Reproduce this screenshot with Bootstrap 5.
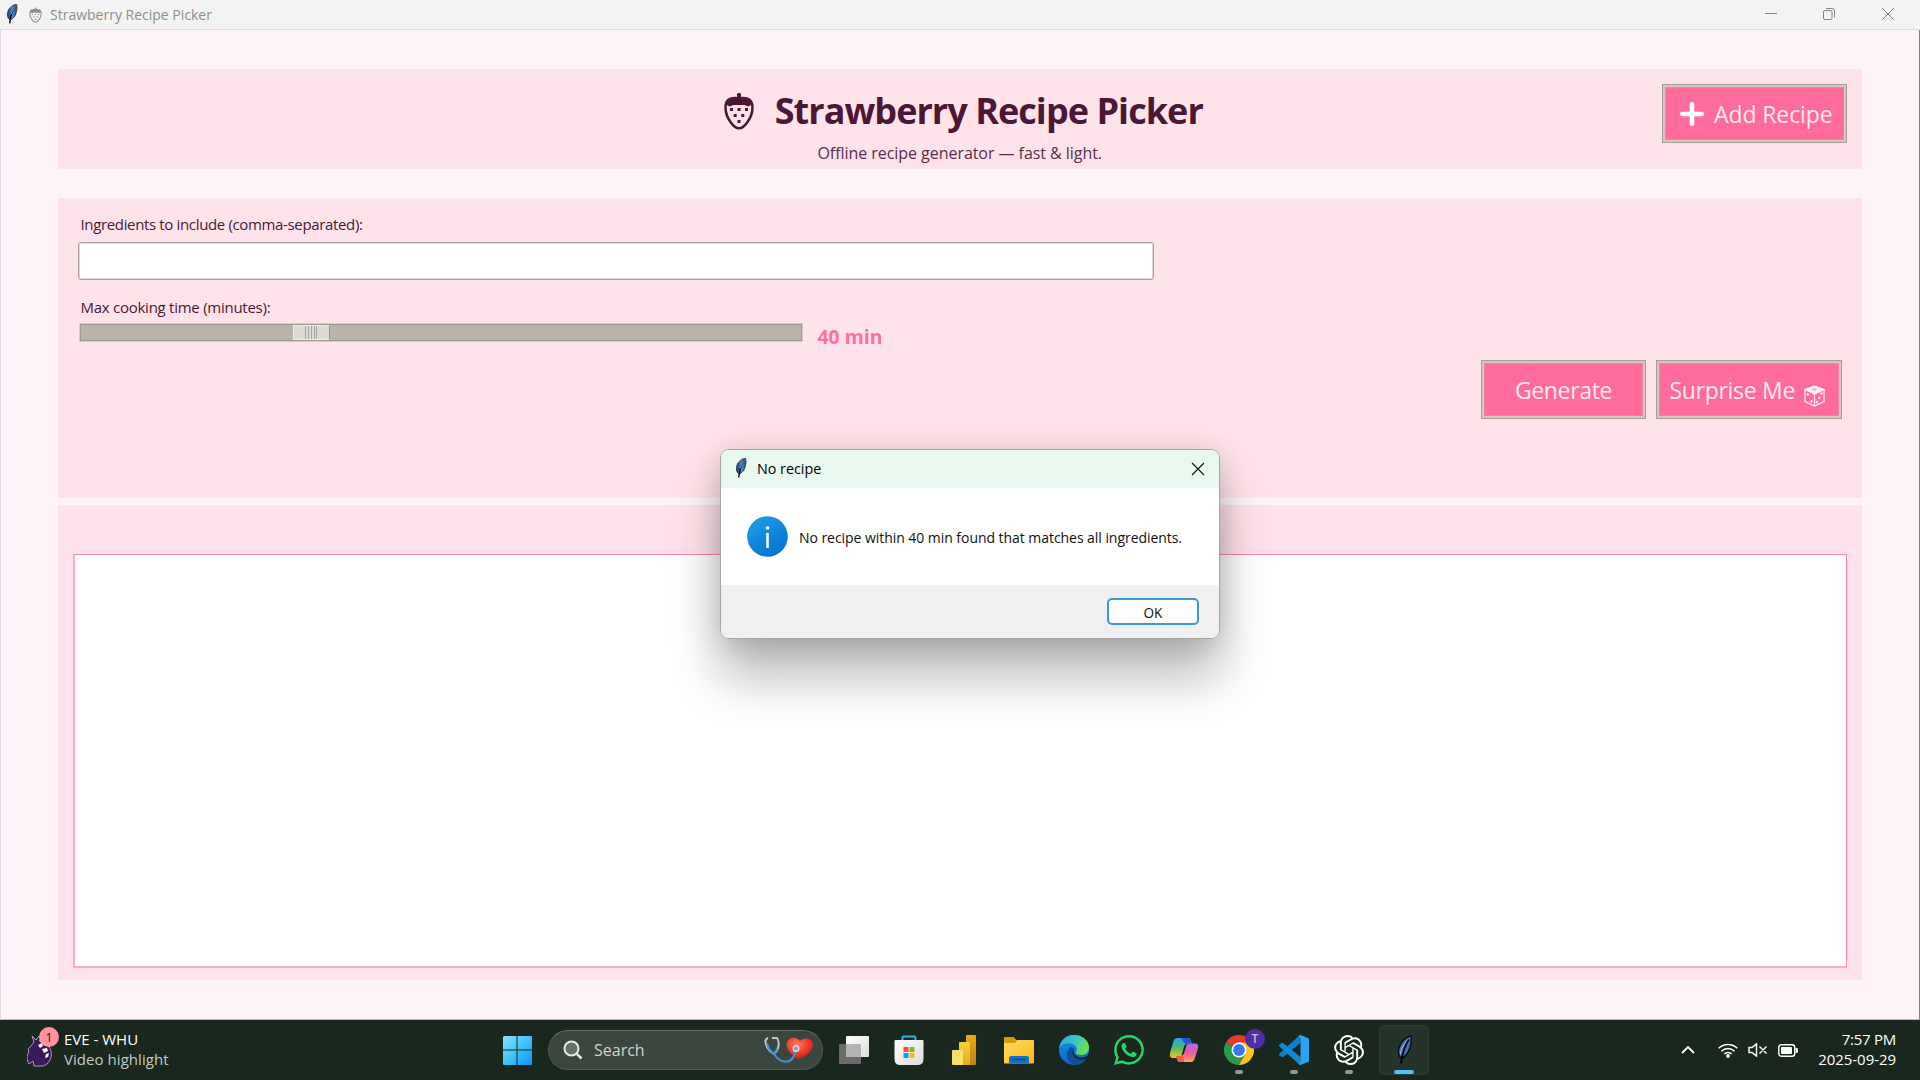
<!DOCTYPE html>
<html lang="en">
<head>
<meta charset="utf-8">
<meta name="viewport" content="width=device-width, initial-scale=1">
<title>Strawberry Recipe Picker</title>
<link rel="stylesheet" href="https://cdn.jsdelivr.net/npm/bootstrap@5.3.0/dist/css/bootstrap.min.css">
<style>
body{font-family:"Open Sans","Noto Sans",sans-serif;width:1920px;height:1080px;overflow:hidden;background:#fff4f7;color:#4b1735;line-height:20px;white-space:nowrap}
svg{display:block;flex:none}
.win-title{height:30px;background:#f3f3f3;border-bottom:1px solid #dedbdc;color:#8f8f8f;font-size:14px}
.win-title .caption{line-height:29px;margin-left:8px}
.win-body{height:990px;padding:39px 57px 0 56.5px;border-left:1px solid #e2d9dc;border-right:1px solid #857f81;border-bottom:1px solid #bdb8ba}
.pane{background:#ffe3ea}
.pane-head{height:100px;padding:15px 15px 0}
.pane-form{height:300px;margin-top:28.5px;padding:15px 20px 0}
.pane-out{height:475px;margin-top:7.5px;padding:48.5px 15px 12px}
.app-name{font-size:36px;font-weight:700;letter-spacing:-.95px;line-height:50px;margin:0}
.tagline{font-size:16px;letter-spacing:-.05px;line-height:22px;color:#5d2c49;margin-top:6px}
.head-side{width:185px}
.pink-btn{height:59px;border-radius:0;border:1px solid #a39f95;background:#ff6b9b;color:#ffe8ef;font-size:23px;letter-spacing:-.35px;line-height:30px;padding:1px 0 0;box-shadow:inset 0 0 0 2px #d9c3c3,inset 0 0 0 3px #ed86a5}
.pink-btn:hover{background:#ff6b9b;color:#ffe8ef}
.field-label{font-size:15px;letter-spacing:-.35px;line-height:22px;padding-left:3px}
.ingredients{width:1076px;height:38px;border:1.500px solid #a7a197;border-radius:3px;margin-top:7px;background:#fff;box-shadow:inset 0 0 0 1px #dcd8d3;padding:0}
.slider{width:724px;height:19px;background:#b9b3a8;border:1px solid #9c978d;outline:1px solid #d6cbc8;outline-offset:-1px;box-shadow:inset 0 0 0 1px #9f998f}
.thumb{width:37px;height:15px;margin:1px 0 0 213px;background:#dddad5;border:1px solid #efede9;border-right-color:#96918a}
.minutes{font-size:19.4px;font-weight:700;color:#ff6f9e;line-height:28px}
.output{height:414px;background:#fff;border:2px solid #ffabc5;border-top:1px solid #ff86ab;border-right:1px solid #ff86ab}
.dialog-win{position:absolute;left:720px;top:449px;width:500px;height:190px;border-radius:9px;border:1px solid #a8a3a4;background:#fff;overflow:hidden;color:#000}
.dialog-shade{position:absolute;left:720px;top:449px;width:500px;height:190px;border-radius:9px;box-shadow:0 38px 52px rgba(0,0,0,.28),0 3px 28px rgba(0,0,0,.16)}
.dialog-bar{height:38px;background:#e8f8ee;padding:0 14px 0 14px}
.dialog-bar .caption{font-size:14.3px;margin-left:10px}
.dialog-msg{height:97px;padding:0 0 0 26px}
.dialog-msg .words{font-size:14px;letter-spacing:-.05px;margin:2px 0 0 11px;color:#111}
.dialog-foot{height:53px;background:#f0f0f0;padding-right:20px}
.ok-btn{width:92px;height:27px;border:2px solid #4196d8;border-radius:5px;background:#fdfdfd;font-size:13.6px;line-height:21px;padding:1px 0 0;color:#111}
.taskbar-strip{height:60px;background:#1a271f;color:#fff;font-size:15px;position:relative}
.widget{padding-left:27px;width:502px}
.news-dot{position:absolute;left:39px;top:7px;width:20px;height:20px;border-radius:50%;background:#ff949f;color:#2d1c1e;font-size:13px;line-height:20px;text-align:center}
.search-pill{width:275px;height:40px;border-radius:20px;background:#3a463e;border:1px solid #4e5952;border-top-color:#636c66;margin:0 15px 0 16px;padding:0 8px 0 14px;color:#cfd3d0;font-size:16px}
.app-slot{width:50px;height:50px;margin-right:5px;padding-top:10px;position:relative;display:flex;justify-content:center;border-radius:5px}
.app-slot.active-app{background:#26332b;border:1px solid #303c35;padding-top:9px}
.run-mark{position:absolute;left:21px;bottom:1px;width:8px;height:4px;border-radius:2px;background:#949b97}
.active-app .run-mark{left:14px;bottom:0;width:20px;background:#4cc2ff}
.user-dot{position:absolute;left:31px;top:4px;width:20px;height:20px;border-radius:50%;background:#512da8;color:#c9b8ea;font-size:12px;font-weight:600;line-height:20px;text-align:center}
</style>
</head>
<body class="d-flex flex-column">
<svg width="0" height="0" class="position-absolute">
  <defs>
    <linearGradient id="fg" x1="0" y1="0" x2="1" y2="0"><stop offset="0" stop-color="#123a78"/><stop offset=".55" stop-color="#4f8fdc"/><stop offset="1" stop-color="#23456f"/></linearGradient>
    <symbol id="feather" viewBox="0 0 12 20">
      <path d="M10.6.5C11.6 4 10.4 11.6 7 14.2 5.6 15.4 4.6 15.8 3.9 15.6 1.3 14.4.8 10.5 2 7.2 3.300 3.700 6.500.6 10.600.500z" fill="url(#fg)" stroke="#3c4044" stroke-width="1"/>
      <path d="M9.200 2.500C6.400 6 4.600 10.200 3.700 19.500" fill="none" stroke="#0b0d12" stroke-width="1.400"/>
      <path d="M9.400 2.600C7.400 4.800 6 7.500 5.300 9.800" fill="none" stroke="#b9d8ff" stroke-width=".8"/>
    </symbol>
    <symbol id="quill" viewBox="0 0 15 29">
      <path d="M14 1C14.500 7 13 15 9.500 19.500 7.500 22 5.500 23 4 23 1.500 21 1 17 2 13 4 7 8.500 2 14 1z" fill="#3f74b4" stroke="#07090c" stroke-width="1.300"/>
      <path d="M12.500 3.500C8 7 4.500 12 3.200 19" fill="none" stroke="#a9bdd4" stroke-width="1"/>
      <path d="M12 4.500C8.500 9 6 14 4 28.500" fill="none" stroke="#050608" stroke-width="1.800"/>
    </symbol>
    <symbol id="berry" viewBox="0 0 30 38">
      <path d="M13 5V1.600Q15 .2 17 1.600V5C24 4.200 29 7 29.300 13H.7C1 7 6 4.200 13 5z" fill="currentColor"/>
      <path d="M1.900 12C.7 19 2.500 24.500 6.500 30 9.500 34.400 12 36.300 15 36.300S20.500 34.400 23.500 30C27.500 24.500 29.300 19 28.100 12" fill="none" stroke="currentColor" stroke-width="2.500"/>
      <path d="M1.500 12l4 2.500 4-1.500 5.500-.5 5.500.5 4 1.500 4-2.500z" fill="currentColor"/>
      <g fill="currentColor"><path d="M6 16h3v3H6zM13.500 16h3v3h-3zM21 16h3v3h-3zM9.700 22h3v3h-3zM17.300 22h3v3h-3zM13.500 28h3v3h-3z"/></g>
    </symbol>
  </defs>
</svg>

<header class="win-title d-flex align-items-center">
  <svg width="12" height="20" style="margin-left:6px;margin-top:-2px"><use href="#feather"/></svg>
  <svg width="13" height="16" style="margin-left:11px"><use href="#berry"/></svg>
  <span class="caption me-auto">Strawberry Recipe Picker</span>
  <svg width="140" height="14" viewBox="0 0 140 14" style="margin:-2px 25px 0 0" fill="none" stroke="#858585">
    <path d="M10 6.500h12"/><rect x="68.500" y="3.500" width="8.500" height="9" rx="1.500"/><path d="M71 1.500h6q2.500 0 2.500 2.500v6.500"/><path d="M127 1l12 12M139 1l-12 12"/>
  </svg>
</header>

<main class="win-body">
  <section class="pane pane-head d-flex justify-content-between">
    <div class="head-side"></div>
    <div class="d-flex flex-column align-items-center pt-1">
      <div class="d-flex align-items-center" style="margin-top:-2px">
        <svg width="30" height="38" style="margin:0 21px 0 7px"><use href="#berry"/></svg>
        <h1 class="app-name">Strawberry Recipe Picker</h1>
      </div>
      <div class="tagline">Offline recipe generator — fast &amp; light.</div>
    </div>
    <button class="btn pink-btn head-side d-flex align-items-center" type="button">
      <svg width="24" height="24" viewBox="0 0 24 24" style="margin:0 10px 0 17px"><path d="M12 2.300v19.400M2.300 12h19.400" stroke="#fff" stroke-width="4.600" stroke-linecap="round"/></svg>
      <span style="letter-spacing:-.1px">Add Recipe</span>
    </button>
  </section>

  <section class="pane pane-form">
    <label class="field-label d-block" for="ing">Ingredients to include (comma-separated):</label>
    <input id="ing" class="ingredients d-block" type="text">
    <div class="field-label" style="margin-top:16px;letter-spacing:-.26px">Max cooking time (minutes):</div>
    <div class="d-flex" style="margin:5px 0 0 1px">
      <div class="slider">
        <div class="thumb d-flex justify-content-center align-items-center"><svg width="12" height="13"><path d="M.5 0v13M3.500 0v13M6.500 0v13M9.500 0v13M11.500 0v13" stroke="#aaa69e"/></svg></div>
      </div>
      <div class="minutes" style="margin-left:15px">40 min</div>
    </div>
    <div class="d-flex justify-content-end" style="gap:10px;margin-top:9px">
      <button class="btn pink-btn" type="button" style="width:165px">Generate</button>
      <button class="btn pink-btn d-flex align-items-center" type="button" style="width:186px">
        <span style="margin:1px 0 0 12.5px;letter-spacing:-.3px">Surprise Me</span>
        <svg width="21" height="22" viewBox="0 0 21 22" style="margin:13px 0 0 9px" fill="none" stroke="#fff0f4" stroke-width="1.300">
          <path d="M10.500 1L20 4.500 10.500 9 1 4.500z" fill="#fff0f4"/><path d="M1 4.500V16.500L10.500 21 20 16.500V4.500M10.500 9V21"/>
          <g fill="#fff0f4" stroke="none"><circle cx="4" cy="9.500" r="1.200"/><circle cx="7.500" cy="16.500" r="1.200"/><circle cx="17.500" cy="8.500" r="1.200"/><circle cx="15.200" cy="13" r="1.200"/><circle cx="13" cy="17" r="1.200"/></g>
          <ellipse cx="10.500" cy="4.500" rx="2.300" ry="1" fill="#ff9fbd" stroke="none"/>
        </svg>
      </button>
    </div>
  </section>

  <section class="pane pane-out"><div class="output"></div></section>
</main>

<footer class="taskbar-strip d-flex align-items-center">
  <div class="widget d-flex align-items-center">
    <svg width="26" height="32" viewBox="0 0 26 32" style="margin-top:1px"><path d="M5 1l4 4 3-4 3 5 7 6c3 4 3 9 1 13l-3 4-4 2H7l-1-5-4 3C0 25-1 21 2 17l-1-3 3-3 3-4z" fill="#381a5c" stroke="#b5a8c4" stroke-width=".9"/><path d="M11 10l4-2 1 3-3 2zM15 14l5-1 1 3-4 2zM19 19l3-1-1 4-3 1zM12 5l3 1-2 1z" fill="#fff"/></svg>
    <span class="news-dot">1</span>
    <div style="margin:-2px 0 0 11px"><div>EVE - WHU</div><div style="color:#c3c8c5;letter-spacing:.05px">Video highlight</div></div>
  </div>
  <svg width="30" height="30" viewBox="0 0 30 30"><defs><linearGradient id="wg" x1="0" y1="0" x2="1" y2="1" ><stop offset="0" stop-color="#8be3ff"/><stop offset=".5" stop-color="#3fc3fb"/><stop offset="1" stop-color="#0a93fb"/></linearGradient></defs><path d="M2 1h12.500v13.500H1V2zM15.500 1H29q1 0 1 1v12.500H15.500zM1 15.500h13.500V30H2q-1 0-1-1zM15.500 15.500H30V29q0 1-1 1H15.500z" fill="url(#wg)"/></svg>
  <div class="search-pill d-flex align-items-center">
    <svg width="20" height="20" viewBox="0 0 20 20" fill="#667069" stroke="#e7eae8" stroke-width="2"><circle cx="8.500" cy="8.500" r="7"/><path d="M13.800 13.800l4.700 4.700" stroke-width="2.500"/></svg>
    <span class="me-auto" style="margin-left:11px">Search</span>
    <svg width="50" height="28" viewBox="0 0 50 28"><defs><radialGradient id="hg" cx=".4" cy=".3" r=".7"><stop offset="0" stop-color="#ff7b4a"/><stop offset=".6" stop-color="#ee3a30"/><stop offset="1" stop-color="#b8201d"/></radialGradient></defs>
      <path d="M34 23.500C26 18 21 12 23 6c2-5 9-6 13-1 4-4 11-3 12.500 1.500C51 13 44 19.500 34 23.500z" fill="url(#hg)"/>
      <path d="M4 2C-1 4 2 13 10 18c5-4 6-12 3-16L8 2" fill="none" stroke="#b9c6d4" stroke-width="2"/><path d="M3 7c1 5 4 9 7 11M13 12c-.500 3-1.500 5-3 6 6 9 19 13 22-5" fill="none" stroke="#4494dc" stroke-width="2"/>
      <circle cx="32" cy="12.500" r="2.800" fill="#8ea4b4" stroke="#d4dce2" stroke-width="1.400"/></svg>
  </div>

  <div class="app-slot" style="margin-left:-9px"><svg width="30" height="30" viewBox="0 0 30 30"><defs><linearGradient id="tv" x1="0" y1="0" x2="1" y2="1"><stop offset="0" stop-color="#fff"/><stop offset="1" stop-color="#dcdcdc"/></linearGradient></defs><rect x="0" y="9" width="22" height="20" rx="1" fill="#6b6b6b"/><rect x="7" y="1" width="23" height="21" rx="1" fill="url(#tv)"/><path d="M7 9h15v13H8q-1 0-1-1z" fill="#b4b4b4"/></svg></div>
  <div class="app-slot"><svg width="30" height="30" viewBox="0 0 30 30"><path d="M8.500 6V2.500q0-1 1-1h11q1 0 1 1V6" fill="none" stroke="#27b3ec" stroke-width="2"/><path d="M.5 6q0-1 1-1h27q1 0 1 1v18q0 6-6 6h-17q-6 0-6-6z" fill="url(#tv)"/><path d="M9.500 12h5v5h-5z" fill="#f35325"/><path d="M15.500 12h5v5h-5z" fill="#81bc06"/><path d="M9.500 18h5v5h-5z" fill="#05a6f0"/><path d="M15.500 18h5v5h-5z" fill="#ffba08"/></svg></div>
  <div class="app-slot"><svg width="30" height="30" viewBox="0 0 30 30"><defs><linearGradient id="p1" x1="0" y1="0" x2="0" y2="1"><stop offset="0" stop-color="#eba912"/><stop offset="1" stop-color="#c5800f"/></linearGradient><linearGradient id="p2" x1="0" y1="0" x2="0" y2="1"><stop offset="0" stop-color="#f6d13f"/><stop offset="1" stop-color="#e3ab1c"/></linearGradient></defs><rect x="17" width="10" height="30" rx="1" fill="url(#p1)"/><path d="M10 8q0-1 1-1h9q1 0 1 1v22H10z" fill="url(#p2)"/><path d="M3 16q0-1 1-1h9q1 0 1 1v14H4q-1 0-1-1z" fill="#f8df68"/></svg></div>
  <div class="app-slot"><svg width="30" height="30" viewBox="0 0 30 30"><defs><linearGradient id="fo" x1="0" y1="0" x2="1" y2="1"><stop offset="0" stop-color="#ffdc6b"/><stop offset="1" stop-color="#fbb813"/></linearGradient></defs><path d="M0 9V3q0-1 1-1h8.500l3 3H29v4z" fill="#dc9c06"/><path d="M0 8l11 0 2.500-3H29q1 0 1 1v21.500q0 1-1 1H1q-1 0-1-1z" fill="url(#fo)"/><path d="M5 28.500V23q0-2 2-2h16q2 0 2 2v5.500z" fill="#1472c4"/><path d="M8.500 24.500h13" stroke="#0a4a8a" stroke-width="1.500"/></svg></div>
  <div class="app-slot"><svg width="30" height="30" viewBox="0 0 30 30"><defs><linearGradient id="e1" x1="0" y1="0" x2="1" y2=".3"><stop offset="0" stop-color="#2aa7e8"/><stop offset=".55" stop-color="#35c3c8"/><stop offset="1" stop-color="#6be04c"/></linearGradient><linearGradient id="e2" x1="0" y1="0" x2="0" y2="1"><stop offset="0" stop-color="#1595e0"/><stop offset="1" stop-color="#0b63c4"/></linearGradient></defs><circle cx="15" cy="15" r="15" fill="url(#e2)"/><path d="M0 14C1 5 7 0 15 0c9 0 15 6 15 12.500 0 5-4 7.500-8 7.500-4.500 0-6-1.800-5-3.200 1.800-2.300 1-5.300-2-7C9 6.500 2 9 0 14z" fill="url(#e1)"/><path d="M12.500 11.500C5 16 7 28 16 30c5 0 9-2.500 11.500-7C20 27 13 21 15 16c.5-1.500 0-3-2.500-4.500z" fill="#104e9c"/><path d="M15.500 12.500c-2.500 4 0 9 5.500 10 4 .5 7.500-1 9-4v6l-2-1c-6 3-14 0-14.500-6 0-2 .8-4 2-5z" fill="#1a271f"/></svg></div>
  <div class="app-slot"><svg width="30" height="30" viewBox="0 0 16 16" fill="#25d366"><path d="M13.601 2.326A7.854 7.854 0 0 0 7.994 0C3.627 0 .068 3.558.064 7.926c0 1.399.366 2.760 1.057 3.965L0 16l4.204-1.102a7.933 7.933 0 0 0 3.790.965h.004c4.368 0 7.926-3.558 7.930-7.930A7.898 7.898 0 0 0 13.600 2.326zM7.994 14.521a6.573 6.573 0 0 1-3.356-.92l-.24-.144-2.494.654.666-2.433-.156-.251a6.560 6.560 0 0 1-1.007-3.505c0-3.626 2.957-6.584 6.591-6.584a6.560 6.560 0 0 1 4.660 1.931 6.557 6.557 0 0 1 1.928 4.660c-.004 3.639-2.961 6.592-6.592 6.592z"/><path d="M11.609 9.587c-.197-.099-1.170-.578-1.353-.646-.182-.065-.315-.099-.445.099-.133.197-.513.646-.627.775-.114.133-.232.148-.43.050-.197-.1-.836-.308-1.592-.985-.59-.525-.985-1.175-1.103-1.372-.114-.198-.011-.304.088-.403.087-.088.197-.232.296-.346.100-.114.133-.198.198-.33.065-.134.034-.248-.015-.347-.05-.099-.445-1.076-.612-1.470-.16-.389-.323-.335-.445-.34-.114-.007-.247-.007-.38-.007a.729.729 0 0 0-.529.247c-.182.198-.691.677-.691 1.654 0 .977.710 1.916.810 2.049.098.133 1.394 2.132 3.383 2.992.470.205.840.326 1.129.418.475.152.904.129 1.246.080.380-.058 1.171-.48 1.338-.943.164-.464.164-.86.114-.992-.049-.133-.182-.198-.38-.297z"/></svg></div>
  <div class="app-slot"><svg width="30" height="30" viewBox="0 0 30 30"><defs><linearGradient id="c1" x1="0" y1="0" x2="0" y2="1"><stop offset="0" stop-color="#22a6ee"/><stop offset=".5" stop-color="#55b86a"/><stop offset="1" stop-color="#f4c51c"/></linearGradient><linearGradient id="c2" x1="0" y1="0" x2="0" y2="1"><stop offset="0" stop-color="#a86bf0"/><stop offset=".5" stop-color="#ee5aa0"/><stop offset="1" stop-color="#ffa060"/></linearGradient></defs><path d="M8 3h11q2 0 2.700 2L23 9h-5q-2 0-3 3l-2.500 9q-1 2-3 2H4q-4 0-3-5L4.500 6Q5.500 3 8 3z" fill="url(#c1)"/><path d="M11 3h8q2 0 2.700 2L23 9h-4q-4 0-5-3-1-2.500-3-3z" fill="#1f58d8"/><path d="M22 27H11q-2 0-2.700-2L7 21h5q2 0 3-3l2.500-8q1-1.500 3-1.500H26q4 0 3 5L25.500 24Q24.500 27 22 27z" fill="url(#c2)"/><path d="M7 21h5l2-1 1 7h-4q-2 0-2.700-2z" fill="#f0603c"/><path d="M12.500 20.500L16 9.700h1.500L14.700 18q-.7 2-2.200 2.500z" fill="#1a271f"/></svg></div>
  <div class="app-slot"><svg width="30" height="30" viewBox="0 0 30 30"><path d="M15 15L2 7.500A15 15 0 0 1 28 7.500z" fill="#e33b2e"/><path d="M15 15L2 7.500A15 15 0 0 0 15 30l6.500-11.300z" fill="#2b9a48"/><path d="M15 15l6.500 3.700L15 30A15 15 0 0 0 28 7.500H15z" fill="#fcc31e"/><circle cx="15" cy="15" r="7.500" fill="#fff"/><circle cx="15" cy="15" r="5.900" fill="#2f7bf0"/></svg><span class="user-dot">T</span><i class="run-mark"></i></div>
  <div class="app-slot"><svg width="30" height="30" viewBox="0 0 30 30"><path d="M21.500 0v8L3.500 22.500.5 20.500q-1-1 0-2L20 .8z" fill="#0a7fd0"/><path d="M21.500 30v-8L3.500 7.500l-3 2q-1 1 0 2L20 29.200z" fill="#1389d6"/><path d="M21.500 0L30 3.500v23L21.500 30q-1.200 0-2-1l2-2V3l-2-2q.8-1 2-1z" fill="#2aa5f2"/></svg><i class="run-mark"></i></div>
  <div class="app-slot"><svg width="30" height="30" viewBox="0 0 24 24" fill="#fff"><path d="M22.2819 9.8211a5.9847 5.9847 0 0 0-.5157-4.9108 6.0462 6.0462 0 0 0-6.5098-2.9A6.0651 6.0651 0 0 0 4.9807 4.1818a5.9847 5.9847 0 0 0-3.9977 2.9 6.0462 6.0462 0 0 0 .7427 7.0966 5.98 5.98 0 0 0 .511 4.9107 6.051 6.051 0 0 0 6.5146 2.9001A5.9847 5.9847 0 0 0 13.2599 24a6.0557 6.0557 0 0 0 5.7718-4.2058 5.9894 5.9894 0 0 0 3.9977-2.9001 6.0557 6.0557 0 0 0-.7475-7.0729zm-9.022 12.6081a4.4755 4.4755 0 0 1-2.8764-1.0408l.1419-.0804 4.7783-2.7582a.7948.7948 0 0 0 .3927-.6813v-6.7369l2.02 1.1686a.071.071 0 0 1 .038.052v5.5826a4.504 4.504 0 0 1-4.4945 4.4944zm-9.6607-4.1254a4.4708 4.4708 0 0 1-.5346-3.0137l.142.0852 4.783 2.7582a.7712.7712 0 0 0 .7806 0l5.8428-3.3685v2.3324a.0804.0804 0 0 1-.0332.0615L9.74 19.9502a4.4992 4.4992 0 0 1-6.1408-1.6464zM2.3408 7.8956a4.485 4.485 0 0 1 2.3655-1.9728V11.6a.7664.7664 0 0 0 .3879.6765l5.8144 3.3543-2.0201 1.1685a.0757.0757 0 0 1-.071 0l-4.8303-2.7865A4.504 4.504 0 0 1 2.3408 7.872zm16.5963 3.8558L13.1038 8.364 15.1192 7.2a.0757.0757 0 0 1 .071 0l4.8303 2.7913a4.4944 4.4944 0 0 1-.6765 8.1042v-5.6772a.79.79 0 0 0-.407-.667zm2.0107-3.0231l-.142-.0852-4.7735-2.7818a.7759.7759 0 0 0-.7854 0L9.409 9.2297V6.8974a.0662.0662 0 0 1 .0284-.0615l4.8303-2.7866a4.4992 4.4992 0 0 1 6.6802 4.66zM8.3065 12.863l-2.02-1.1638a.0804.0804 0 0 1-.038-.0567V6.0742a4.4992 4.4992 0 0 1 7.3757-3.4537l-.142.0805L8.704 5.459a.7948.7948 0 0 0-.3927.6813zm1.0976-2.3654l2.602-1.4998 2.6069 1.4998v2.9994l-2.5974 1.4997-2.6067-1.4997Z"/></svg><i class="run-mark"></i></div>
  <div class="app-slot active-app"><svg width="15" height="29"><use href="#quill"/></svg><i class="run-mark"></i></div>

  <div class="d-flex align-items-center ms-auto" style="margin-right:24px">
    <svg width="14" height="8" viewBox="0 0 14 8" fill="none" stroke="#fff" stroke-width="1.800"><path d="M1 7l6-6 6 6"/></svg>
    <svg width="20" height="15" viewBox="0 0 20 15" fill="none" stroke="#fff" stroke-width="1.500" style="margin-left:23px"><path d="M.7 5.300a13 13 0 0 1 18.600 0M3.500 8.200a9 9 0 0 1 13 0M6.300 11a5.300 5.300 0 0 1 7.400 0"/><circle cx="10" cy="13" r="1.900" fill="#fff" stroke="none"/></svg>
    <svg width="20" height="14" viewBox="0 0 20 14" fill="none" stroke="#f0f2f1" stroke-width="1.500" style="margin-left:10px"><path d="M1 4.500h3L8.500.8v12.400L4 9.500H1zM11.500 3.500l7 7M18.500 3.500l-7 7"/></svg>
    <svg width="20" height="13" viewBox="0 0 20 13" style="margin-left:10px"><rect x=".8" y=".8" width="15.900" height="11.400" rx="2.500" fill="none" stroke="#fff" stroke-width="1.400"/><rect x="3" y="3" width="11" height="7" rx="1" fill="#fff"/><path d="M17.500 4h1q1.500 0 1.500 1.300v2.400Q20 9 18.500 9h-1z" fill="#fff"/></svg>
    <div class="text-end" style="margin:-2px 0 0 20px;letter-spacing:-.05px;width:78px"><div style="letter-spacing:-.25px">7:57 PM</div><div>2025-09-29</div></div>
  </div>
</footer>

<div class="dialog-shade"></div>
<div class="dialog-win" role="dialog">
  <div class="dialog-bar d-flex align-items-center">
    <svg width="12" height="20" style="margin-top:-3px"><use href="#feather"/></svg>
    <span class="caption me-auto">No recipe</span>
    <svg width="14" height="14" viewBox="0 0 14 14" stroke="#111" stroke-width="1.100"><path d="M1 1l12 12M13 1L1 13"/></svg>
  </div>
  <div class="dialog-msg d-flex align-items-center">
    <svg width="41" height="41" viewBox="0 0 41 41"><defs><linearGradient id="ig" x1=".2" y1="0" x2=".8" y2="1"><stop offset="0" stop-color="#1f9ee6"/><stop offset="1" stop-color="#0072d0"/></linearGradient></defs><circle cx="20.500" cy="20.500" r="20.300" fill="url(#ig)"/><circle cx="20.500" cy="12" r="1.800" fill="#fff"/><path d="M20.500 17v15" stroke="#fff" stroke-width="2.600"/></svg>
    <span class="words">No recipe within 40 min found that matches all ingredients.</span>
  </div>
  <div class="dialog-foot d-flex align-items-center justify-content-end">
    <button class="btn ok-btn" type="button">OK</button>
  </div>
</div>
<script src="https://cdn.jsdelivr.net/npm/bootstrap@5.3.0/dist/js/bootstrap.bundle.min.js"></script>
</body>
</html>
